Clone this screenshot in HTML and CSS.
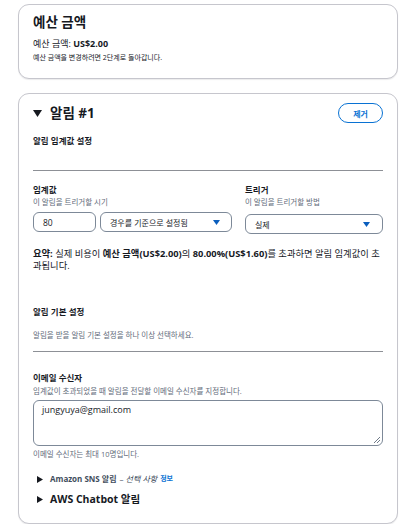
FILE: index.html
```html
<!DOCTYPE html>
<html lang="ko">
<head>
<meta charset="utf-8">
<title>예산 알림</title>
<link rel="stylesheet" href="styles.css">
</head>
<body>
<section class="card budget">
  <h2 class="budget-title">예산 금액</h2>
  <p class="budget-line">예산 금액: <b>US$2.00</b></p>
  <p class="budget-note">예산 금액을 변경하려면 2단계로 돌아갑니다.</p>
</section>

<section class="card alert">
  <div class="alert-head">
    <h2 class="alert-title">
      <svg class="tri-down" width="9" height="7" viewBox="0 0 9 7"><path d="M0 0H9L4.5 7Z" fill="#16191f"/></svg>
      <span>알림 #1</span>
    </h2>
    <button class="btn-remove">제거</button>
  </div>

  <div class="sub-head">
    <h3 class="sub-title">알림 임계값 설정</h3>
  </div>

  <div class="threshold">
    <div class="field">
      <div class="label">임계값</div>
      <div class="desc">이 알림을 트리거할 시기</div>
      <div class="controls">
        <div class="input num">80</div>
        <div class="input select">
          <span>경우를 기준으로 설정됨</span>
          <svg class="caret" width="7" height="5" viewBox="0 0 7 5"><path d="M0 0H7L3.5 5Z"/></svg>
        </div>
      </div>
    </div>
    <div class="field">
      <div class="label">트리거</div>
      <div class="desc">이 알림을 트리거할 방법</div>
      <div class="input select trigger">
        <span>실제</span>
        <svg class="caret" width="7" height="5" viewBox="0 0 7 5"><path d="M0 0H7L3.5 5Z"/></svg>
      </div>
    </div>
  </div>

  <p class="summary"><span class="seg"><b>요약:</b> 실제 비용이 <b>예산 금액(US$2.00)</b>의 <b>80.00%(US$1.60)</b>를 초과하면 알림 임계값이 초</span><span class="seg">과됩니다.</span></p>

  <div class="sub-head pref">
    <h3 class="sub-title">알림 기본 설정</h3>
    <p class="sub-desc">알림을 받을 알림 기본 설정을 하나 이상 선택하세요.</p>
  </div>

  <div class="email">
    <div class="label">이메일 수신자</div>
    <div class="desc">임계값이 초과되었을 때 알림을 전달할 이메일 수신자를 지정합니다.</div>
    <div class="textarea">
      <span>jungyuya@gmail.com</span>
      <svg class="resize" width="7" height="7" viewBox="0 0 7 7"><path d="M1 7L7 1M4 7L7 4" stroke="#5f6b7a" stroke-width="0.9"/></svg>
    </div>
    <div class="hint">이메일 수신자는 최대 10명입니다.</div>
  </div>

  <div class="expander sns">
    <svg class="tri-right" width="6" height="7" viewBox="0 0 6 7"><path d="M0 0L6 3.5L0 7Z" fill="#16191f"/></svg>
    <span class="sns-name">Amazon SNS 알림</span>
    <span class="sns-opt">– <i>선택 사항</i></span>
    <a class="info">정보</a>
  </div>
  <div class="expander chatbot">
    <svg class="tri-right" width="6" height="7" viewBox="0 0 6 7"><path d="M0 0L6 3.5L0 7Z" fill="#16191f"/></svg>
    <span>AWS Chatbot 알림</span>
  </div>
</section>
</body>
</html>
```
FILE: styles.css
```css
* { box-sizing: border-box; }
html, body { margin: 0; background: #ffffff; }
body {
  padding: 4px 0 0 18px;
  font-family: "Open Sans", "Noto Sans CJK KR", sans-serif;
  color: #16191f;
}
h2, h3, p { margin: 0; }

.card {
  width: 380px;
  border: 1px solid #c6c6cd;
  border-radius: 11px;
  background: #fff;
  box-shadow: 0 1px 1px rgba(0, 7, 22, 0.08);
}

/* budget card */
.budget { padding: 7px 14px 13px; height: 75px; }
.budget-title { font-size: 13.5px; line-height: 20px; font-weight: 700; }
.budget-line { margin-top: 4px; font-size: 9px; line-height: 16px; }
.budget-line b { font-weight: 700; }
.budget-note { font-size: 7px; line-height: 12px; }

/* alert card */
.alert { margin-top: 14px; padding: 9px 14px 16px; }
.alert-head { display: flex; justify-content: space-between; align-items: center; height: 20px; }
.alert-title { display: flex; align-items: center; gap: 8px; font-size: 13.5px; line-height: 20px; font-weight: 700; }
.tri-down { display: block; }
.btn-remove {
  width: 45px; height: 20px;
  border: 1.5px solid #0972d3;
  border-radius: 10px;
  background: #fff;
  color: #0972d3;
  font-family: "Open Sans", "Noto Sans CJK KR", sans-serif;
  font-size: 8px; font-weight: 700;
  padding: 0;
}

.sub-head { margin-top: 11px; padding-bottom: 22px; border-bottom: 1px solid #8d9096; }
.sub-title { font-size: 8.5px; line-height: 14px; font-weight: 700; }
.sub-head.pref { margin-top: 33px; padding-bottom: 10px; }
.sub-desc { margin-top: 10px; font-size: 7.5px; line-height: 12px; color: #5f6b7a; }

.threshold { display: grid; grid-template-columns: 199px 1fr; column-gap: 13px; margin-top: 12px; }
.label { font-size: 8.5px; line-height: 14px; font-weight: 700; }
.desc { font-size: 7.5px; line-height: 11px; color: #5f6b7a; }
.controls { display: flex; gap: 4px; margin-top: 4px; }
.input {
  height: 20px;
  border: 1px solid #7d8998;
  border-radius: 6px;
  display: flex; align-items: center;
  font-size: 8px;
  color: #16191f;
}
.num { width: 63px; padding-left: 9px; font-size: 8.5px; }
.select { flex: 1; justify-content: space-between; padding: 0 11px 0 9px; }
.trigger { margin-top: 6px; padding-right: 12px; }
.caret { display: block; fill: #0b5ebd; }

.summary { margin-top: 14px; font-size: 9.3px; line-height: 12px; }
.summary .seg { display: block; }
.summary b { font-weight: 700; }

.email { margin-top: 19px; }
.email .desc { margin-top: 1px; }
.textarea {
  position: relative;
  margin-top: 3px;
  height: 46px;
  border: 1px solid #7d8998;
  border-radius: 6px;
  padding: 2px 8px;
  font-size: 9px; line-height: 14px;
}
.resize { position: absolute; right: 2px; bottom: 2px; }
.hint { margin-top: 2px; font-size: 7.5px; line-height: 12px; color: #5f6b7a; }

.expander { display: flex; align-items: center; gap: 7px; padding-left: 4px; }
.tri-right { display: block; flex: none; }
.sns { margin-top: 12px; height: 14px; font-size: 8px; line-height: 14px; gap: 0; }
.sns .tri-right { margin-right: 7px; }
.sns-name { font-weight: 700; color: #414d5c; }
.sns-opt { margin-left: 3px; color: #414d5c; }
.sns-opt i { font-style: italic; }
.info { margin-left: 3px; color: #0972d3; font-weight: 700; font-size: 7px; }
.chatbot { margin-top: 5px; height: 16px; font-size: 10.5px; line-height: 16px; font-weight: 700; }
```
